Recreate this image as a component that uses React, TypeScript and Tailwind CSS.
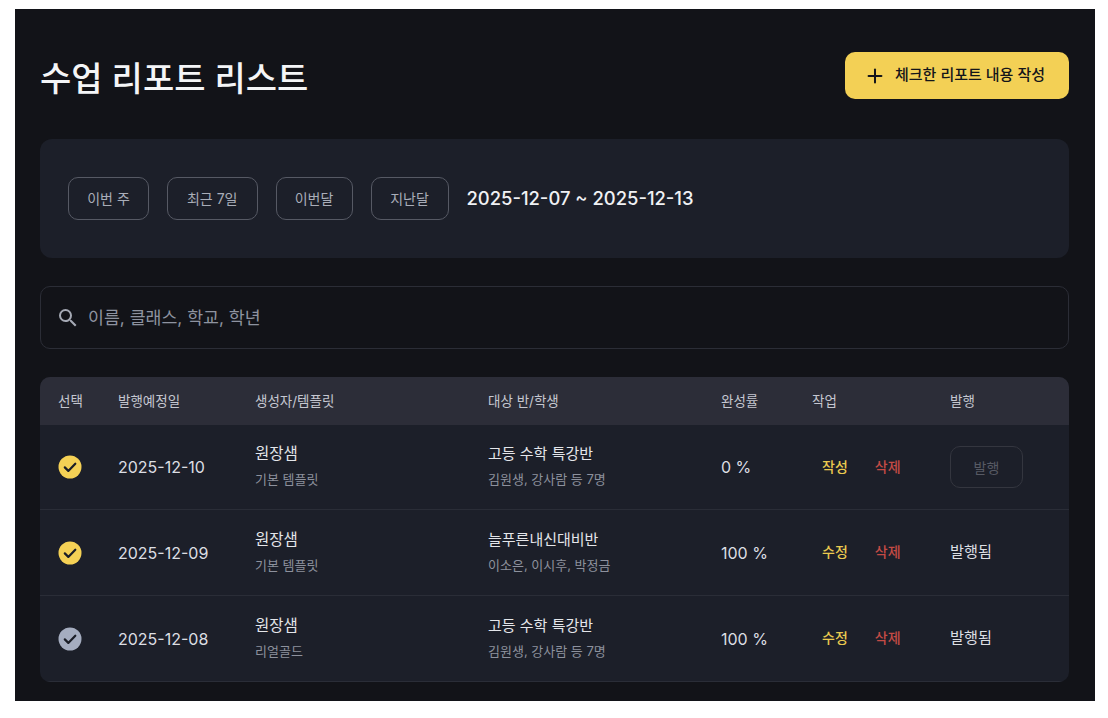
import { Plus } from "lucide-react";

const FONT = "font-['Inter','Noto_Sans_CJK_KR',sans-serif]";
const GRID = "grid grid-cols-[60px_137px_233px_233px_91px_138px_1fr] items-center";

function Check({ tone }: { tone: string }) {
  return (
    <svg width="24" height="24" viewBox="0 0 24 24" className={tone}>
      <circle cx="12" cy="12" r="11.5" fill="currentColor" />
      <path d="M6.8 12.4l3.5 3.5 7-7.2" fill="none" stroke="#1b1e27" strokeWidth="2.2" strokeLinecap="round" strokeLinejoin="round" />
    </svg>
  );
}

const rows = [
  { tone: "text-[#f5d155]", date: "2025-12-10", tpl: "기본 템플릿", cls: "고등 수학 특강반", st: "김원생, 강사람 등 7명", pct: "0 %", act: "작성", pub: false, h: "h-[85px]" },
  { tone: "text-[#f5d155]", date: "2025-12-09", tpl: "기본 템플릿", cls: "늘푸른내신대비반", st: "이소은, 이시후, 박정금", pct: "100 %", act: "수정", pub: true, h: "h-[86px]" },
  { tone: "text-[#a5adc0]", date: "2025-12-08", tpl: "리얼골드", cls: "고등 수학 특강반", st: "김원생, 강사람 등 7명", pct: "100 %", act: "수정", pub: true, h: "h-[86px]" },
];

const chips = [
  { t: "이번 주", w: "w-[81px]" },
  { t: "최근 7일", w: "w-[90.5px]" },
  { t: "이번달", w: "w-[77px]" },
  { t: "지난달", w: "w-[78px]" },
];

export default function App() {
  return (
    <div className={`${FONT} min-h-[718px] bg-white pt-[9px] pl-[15px] pr-[13px] pb-[17px]`}>
      <div className="h-[692px] bg-[#121318] pl-[25px] pr-[26px] pt-[43px]">
        <div className="flex items-center justify-between h-[47px]">
          <h1 className="text-[34px] leading-[48px] pt-[6px] font-medium text-[#f4f5f7]">수업 리포트 리스트</h1>
          <button className="flex items-center h-[47px] w-[224px] pl-[19px] rounded-[10px] bg-[#f3d055] text-[#14151a] text-[15px] font-medium">
            <Plus size={22} strokeWidth={2.2} className="mr-[9px]" />
            체크한 리포트 내용 작성
          </button>
        </div>

        <div className="mt-[40px] h-[119px] rounded-[12px] bg-[#1c1f29] pl-[28px] flex items-center gap-[18px]">
          {chips.map((c) => (
            <button key={c.t} className={`${c.w} h-[43px] rounded-[10px] border border-[#565964] text-[14px] text-[#a9adb8]`}>
              {c.t}
            </button>
          ))}
          <span className="text-[18.4px] font-medium text-[#f0f1f4]">2025-12-07 ~ 2025-12-13</span>
        </div>

        <div className="mt-[28px] h-[63px] rounded-[10px] border border-[#2b2d36] flex items-center pl-[15px] gap-[8px]">
          <svg width="24" height="24" viewBox="0 0 24 24" fill="#a5a9b4">
            <path d="M15.5 14h-.79l-.28-.27A6.47 6.47 0 0 0 16 9.5 6.5 6.5 0 1 0 9.5 16c1.61 0 3.09-.59 4.23-1.57l.27.28v.79l5 4.99L20.49 19l-4.99-5zm-6 0C7.01 14 5 11.99 5 9.5S7.01 5 9.5 5 14 7.01 14 9.5 11.99 14 9.5 14z" />
          </svg>
          <span className="text-[17.3px] text-[#8e93a0]">이름, 클래스, 학교, 학년</span>
        </div>

        <div className="mt-[28px] rounded-[10px] bg-[#1c1f29] overflow-hidden">
          <div className={`${GRID} h-[48px] bg-[#2c2d38] pl-[18px] text-[13.5px] text-[#c5c7d0]`}>
            <span>선택</span>
            <span>발행예정일</span>
            <span>생성자/템플릿</span>
            <span>대상 반/학생</span>
            <span>완성률</span>
            <span>작업</span>
            <span>발행</span>
          </div>
          {rows.map((r) => (
            <div key={r.date} className={`${GRID} ${r.h} border-b border-[#2a2d37] pl-[18px]`}>
              <Check tone={r.tone} />
              <span className="text-[16px] text-[#dcdee3]">{r.date}</span>
              <div className="flex flex-col gap-[6px] pb-[2px]">
                <span className="text-[15.5px] leading-[20px] text-[#e4e6ea]">원장샘</span>
                <span className="text-[13px] leading-[18px] text-[#8d919d]">{r.tpl}</span>
              </div>
              <div className="flex flex-col gap-[6px] pb-[2px]">
                <span className="text-[15px] leading-[20px] text-[#e4e6ea]">{r.cls}</span>
                <span className="text-[13px] leading-[18px] text-[#8d919d]">{r.st}</span>
              </div>
              <span className="text-[16px] text-[#dcdee3]">{r.pct}</span>
              <div className="flex pl-[10px] pb-[2px] gap-[27px] text-[14px] font-medium">
                <span className="text-[#eac94f]">{r.act}</span>
                <span className="text-[#c44b45]">삭제</span>
              </div>
              {r.pub ? (
                <span className="text-[15.2px] text-[#dcdee3]">발행됨</span>
              ) : (
                <button className="w-[73px] h-[42px] rounded-[10px] border border-[#34363f] text-[14px] text-[#575a64]">발행</button>
              )}
            </div>
          ))}
        </div>
      </div>
    </div>
  );
}
